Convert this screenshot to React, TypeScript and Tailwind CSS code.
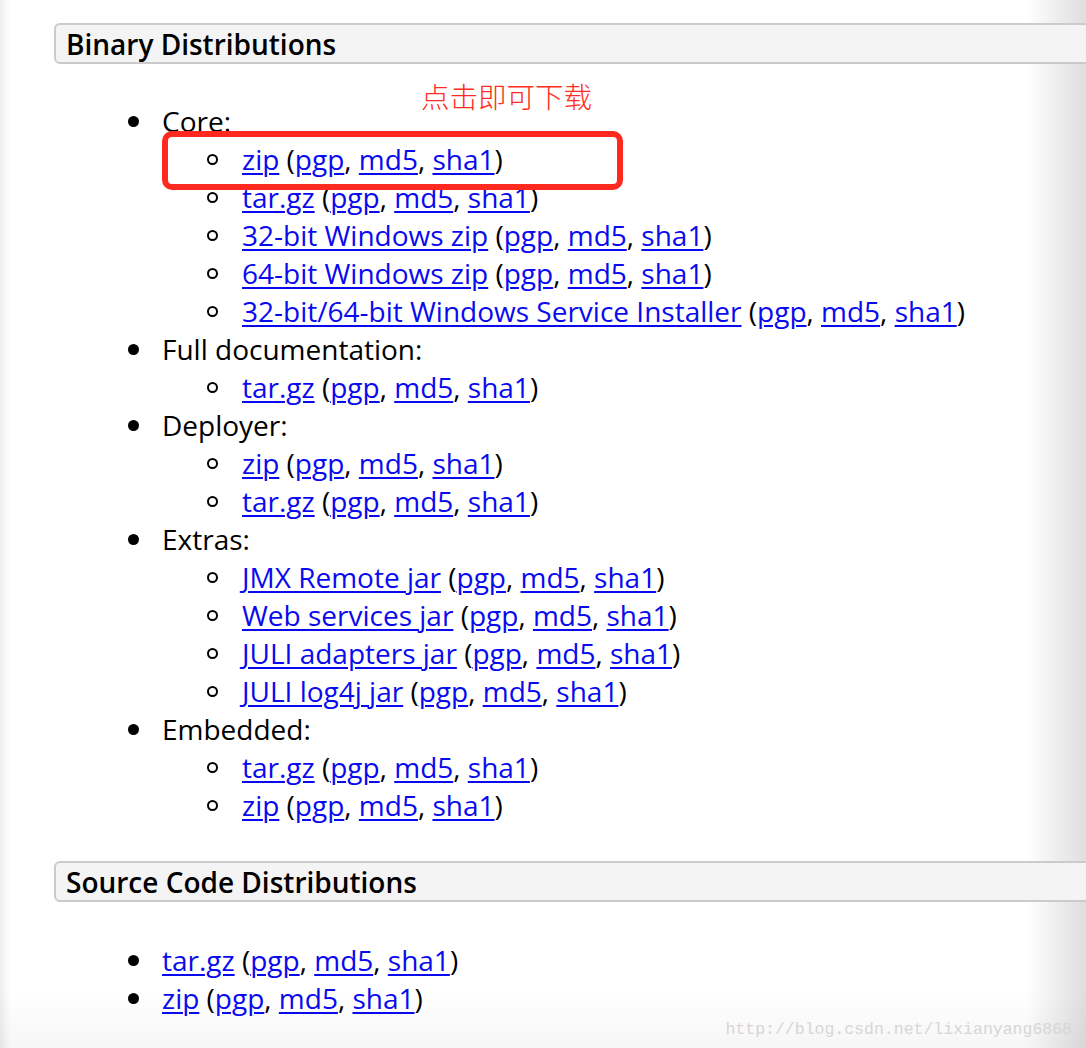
import React from "react";

type Item = { link?: string; label?: string; children?: Item[] };

const binary: Item[] = [
  {
    label: "Core:",
    children: [
      { link: "zip" },
      { link: "tar.gz" },
      { link: "32-bit Windows zip" },
      { link: "64-bit Windows zip" },
      { link: "32-bit/64-bit Windows Service Installer" },
    ],
  },
  { label: "Full documentation:", children: [{ link: "tar.gz" }] },
  { label: "Deployer:", children: [{ link: "zip" }, { link: "tar.gz" }] },
  {
    label: "Extras:",
    children: [
      { link: "JMX Remote jar" },
      { link: "Web services jar" },
      { link: "JULI adapters jar" },
      { link: "JULI log4j jar" },
    ],
  },
  { label: "Embedded:", children: [{ link: "tar.gz" }, { link: "zip" }] },
];

const A = ({ children }: { children: React.ReactNode }) => (
  <a href="#" className="text-[#0a0aee] underline decoration-[1.5px] underline-offset-[3px]">
    {children}
  </a>
);

const LinkLine = ({ name }: { name: string }) => (
  <span className="whitespace-nowrap">
    <A>{name}</A> (<A>pgp</A>, <A>md5</A>, <A>sha1</A>)
  </span>
);

const TopRow = ({ children }: { children: React.ReactNode }) => (
  <div className="flex h-[38px] items-center">
    <span className="ml-[128px] mr-[23px] h-[11px] w-[11px] shrink-0 rounded-full bg-black" />
    {children}
  </div>
);

const SubRow = ({ children }: { children: React.ReactNode }) => (
  <div className="flex h-[38px] items-center">
    <span className="ml-[207px] mr-[24px] h-[11px] w-[11px] shrink-0 rounded-full border-2 border-black" />
    {children}
  </div>
);

const Header = ({ title }: { title: string }) => (
  <div className="ml-[54px] mr-[-20px] flex h-[41px] items-center rounded-l-[6px] border-2 border-[#cbcbcb] bg-[#f4f4f4] pl-[10px]">
    <span className="text-[28px] font-semibold text-black">{title}</span>
  </div>
);

export default function App() {
  return (
    <div
      className="relative h-[1048px] w-[1086px] overflow-hidden bg-white text-[28px] leading-[38px] text-black"
      style={{ fontFamily: '"Open Sans", "Noto Sans", sans-serif' }}
    >
      <div className="flex h-full flex-col bg-[linear-gradient(to_right,rgba(0,0,0,0.07)_0px,rgba(0,0,0,0)_10px,rgba(0,0,0,0)_calc(100%-60px),rgba(0,0,0,0.13)_100%),linear-gradient(to_bottom,rgba(0,0,0,0)_990px,rgba(0,0,0,0.035)_100%)] pt-[23px]">
        <Header title="Binary Distributions" />
        <div className="mt-[38px]">
          {binary.map((g, i) => (
            <React.Fragment key={i}>
              <TopRow>
                <span className="whitespace-nowrap">{g.label}</span>
              </TopRow>
              {g.children?.map((c, j) => (
                <SubRow key={j}>
                  <LinkLine name={c.link!} />
                </SubRow>
              ))}
            </React.Fragment>
          ))}
        </div>
        <div className="mt-[37px]">
          <Header title="Source Code Distributions" />
        </div>
        <div className="mt-[39px]">
          <TopRow>
            <LinkLine name="tar.gz" />
          </TopRow>
          <TopRow>
            <LinkLine name="zip" />
          </TopRow>
        </div>
        <div className="mt-auto flex justify-end pb-[8px] pr-[14px]">
          <span
            className="text-[16.5px] leading-[20px] text-[#d6d6d6]"
            style={{ fontFamily: '"Liberation Mono", "DejaVu Sans Mono", monospace' }}
          >
            http://blog.csdn.net/lixianyang6868
          </span>
        </div>
      </div>

      {/* annotations */}
      <div
        className="absolute left-[421px] top-[78px] text-[28.5px] font-light leading-[36px] text-[#ff2d21]"
        style={{ fontFamily: '"Noto Sans CJK SC", sans-serif' }}
      >
        点击即可下载
      </div>
      <div className="absolute left-[162px] top-[131px] h-[59px] w-[461px] rounded-[10px] border-[6px] border-[#ff2a1f]" />
    </div>
  );
}
